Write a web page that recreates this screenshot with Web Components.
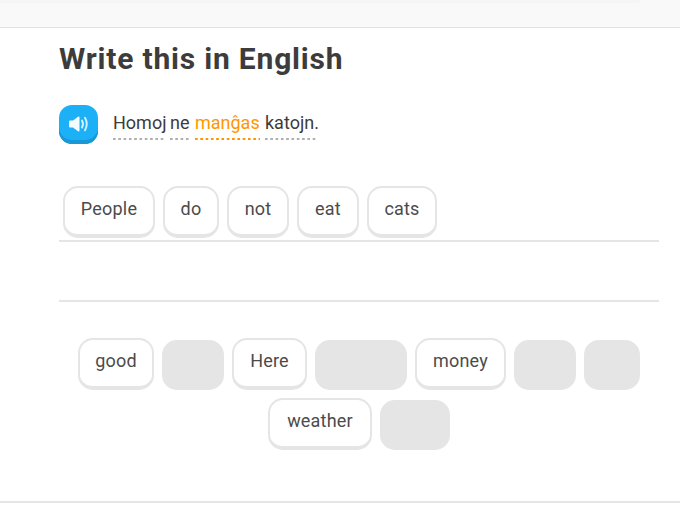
<!DOCTYPE html>
<html><head><meta charset="utf-8">
<style>
html,body{margin:0;padding:0;background:#fff}
body{font-family:Roboto,sans-serif;color:#3c3c3c;width:680px;height:515px;overflow:hidden}
</style></head><body>
<lesson-screen>
<top-strip slot="top"></top-strip>
<h-title>Write this in English</h-title>
<prompt-line></prompt-line>
<answer-area>
<word-tile w="92">People</word-tile><word-tile w="56">do</word-tile><word-tile w="62">not</word-tile><word-tile w="62">eat</word-tile><word-tile w="70">cats</word-tile>
</answer-area>
<word-bank>
<word-tile w="76">good</word-tile><word-tile w="62" used></word-tile><word-tile w="75">Here</word-tile><word-tile w="92" used></word-tile><word-tile w="91">money</word-tile><word-tile w="62" used></word-tile><word-tile w="56" used></word-tile>
<word-tile w="104">weather</word-tile><word-tile w="70" used></word-tile>
</word-bank>
</lesson-screen>
<script>
function def(name,html){customElements.define(name,class extends HTMLElement{constructor(){super();this.attachShadow({mode:'open'}).innerHTML=html;}});}
def('lesson-screen',`<style>:host{display:flex;flex-direction:column;width:680px;height:515px}
.main{flex:none;height:473px;padding-left:59px;width:600px}
.foot{border-top:2px solid #e5e5e5;flex:none}
</style><slot name="top"></slot><div class="main"><slot></slot></div><div class="foot"></div>`);
def('top-strip',`<style>:host{display:block;height:27px;background:#f9f9f9;border-bottom:1px solid #e2e2e2;flex:none}
.s{height:3px;width:640px;background:#f5f5f5;border-radius:0 0 4px 0}</style><div class="s"></div>`);
def('h-title',`<style>:host{display:block;font:700 30px/38px Roboto,sans-serif;color:#3c3c3c;padding-top:12px;letter-spacing:.8px;white-space:nowrap}</style><slot></slot>`);
def('prompt-line',`<style>:host{display:flex;align-items:flex-start;gap:15px;margin-top:27px;height:40px}
.b{width:39px;height:39px;border-radius:13px;background:#1cb0f6;box-shadow:inset 0 -4px 0 #1899d6;display:flex;align-items:center;justify-content:center;padding-bottom:2px;box-sizing:border-box}
.t{font:400 18px/22px Roboto,sans-serif;display:flex;gap:5px;padding-top:7px;white-space:nowrap}
.w{display:inline-block;flex:none;height:28px;background-image:linear-gradient(90deg,#afafaf 0 3px,transparent 3px 5.3px);background-size:5.3px 2px;background-repeat:repeat-x;background-position:0 100%}
.o{color:#ff9600;background-image:linear-gradient(90deg,#ff9600 0 3px,transparent 3px 5.3px)}
</style><div class="b"><svg width="22" height="20" viewBox="0 0 22 20"><path d="M1 7.500Q1 6.500 2 6.500H5L10 2.800Q11.500 2 11.500 3.500V16.500Q11.500 18 10 17.200L5 13.500H2Q1 13.500 1 12.500Z" fill="#fff" opacity=".95"/><path d="M14 6.500Q16 10 14 13.500M17 3.800Q20.500 10 17 16.200" fill="none" stroke="#d2effd" stroke-width="2" stroke-linecap="round"/></svg></div>
<div class="t"><span class="w" style="width:52px">Homoj</span><span class="w" style="width:20px">ne</span><span class="w o" style="width:65px">manĝas</span><span class="w" style="width:52px">katojn.</span></div>`);
def('answer-area',`<style>:host{display:block;margin-top:41px;width:600px}
.r{display:flex;gap:8px;padding-left:4px;height:54px;border-bottom:2px solid #e5e5e5;align-items:flex-start}
.e{height:58px;border-bottom:2px solid #e5e5e5}</style><div class="r"><slot></slot></div><div class="e"></div>`);
def('word-bank',`<style>:host{display:flex;flex-wrap:wrap;justify-content:center;gap:8px;width:600px;margin-top:36px}</style><slot></slot>`);
class Tile extends HTMLElement{constructor(){super();const s=this.attachShadow({mode:'open'});const w=this.getAttribute('w');const u=this.hasAttribute('used');
s.innerHTML=`<style>:host{display:block;flex:none;box-sizing:border-box;width:${w}px;height:52px;${u?'background:#e5e5e5;border-radius:15px;margin-top:2px;height:50px;':'background:#fff;border:2px solid #e5e5e5;border-bottom-width:4px;border-radius:15px;'}
font:400 18px/42px Roboto,sans-serif;letter-spacing:.2px;color:#4b4b4b;text-align:center;white-space:nowrap}</style><slot></slot>`;}}
customElements.define('word-tile',Tile);
</script>
</body></html>
